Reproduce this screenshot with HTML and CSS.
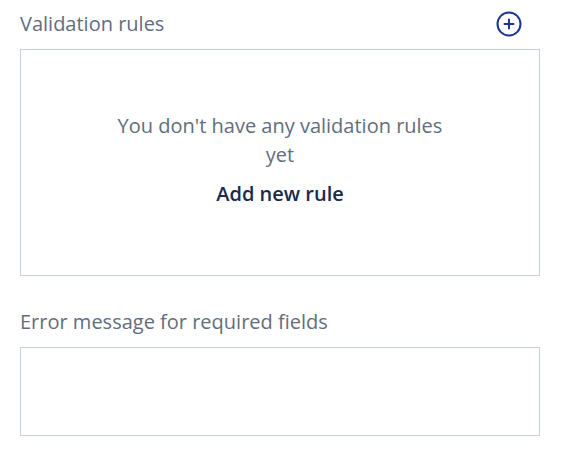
FILE: index.html
```html
<!DOCTYPE html>
<html>
<head>
<meta charset="utf-8">
<link rel="stylesheet" href="styles.css">
</head>
<body>
<div class="page">
  <section class="field">
    <div class="field-head">
      <span class="label">Validation rules</span>
      <button class="icon-btn" aria-label="Add rule">
        <svg width="26" height="26" viewBox="0 0 26 26" fill="none" stroke="#1a3596" stroke-width="2" stroke-linecap="round">
          <circle cx="13" cy="13" r="11.5"/>
          <path d="M13 8.5v9M8.5 13h9"/>
        </svg>
      </button>
    </div>
    <div class="rules-box">
      <p class="empty-text">You don't have any validation rules yet</p>
      <a class="add-link">Add new rule</a>
    </div>
  </section>
  <section class="field field-second">
    <div class="field-head">
      <span class="label">Error message for required fields</span>
    </div>
    <div class="input-box"></div>
  </section>
</div>
</body>
</html>
```
FILE: styles.css
```css
html, body {
  margin: 0;
  padding: 0;
  background: #ffffff;
}
body {
  font-family: "Open Sans", "Noto Sans", sans-serif;
}
.page {
  padding: 12px 22px 0 20px;
}
.field-head {
  display: flex;
  align-items: center;
  justify-content: space-between;
  height: 24px;
  margin-bottom: 13px;
  padding-right: 18px;
}
.label {
  font-size: 20px;
  line-height: 24px;
  color: #626d7e;
}
.icon-btn {
  border: 0;
  background: none;
  padding: 0;
  width: 26px;
  height: 26px;
  display: block;
}
.icon-btn svg { display: block; }
.rules-box {
  border: 1px solid #c5d0e6;
  box-sizing: border-box;
  height: 227px;
  display: flex;
  flex-direction: column;
  align-items: center;
  padding-top: 61px;
}
.empty-text {
  margin: 0;
  max-width: 340px;
  text-align: center;
  font-size: 20px;
  line-height: 29px;
  color: #626d7e;
}
.add-link {
  margin-top: 13px;
  font-size: 20px;
  line-height: 24px;
  font-weight: 600;
  color: #1a2b4c;
}
.field-second {
  margin-top: 34px;
}
.input-box {
  border: 1px solid #c5d0e6;
  height: 87px;
}
```
